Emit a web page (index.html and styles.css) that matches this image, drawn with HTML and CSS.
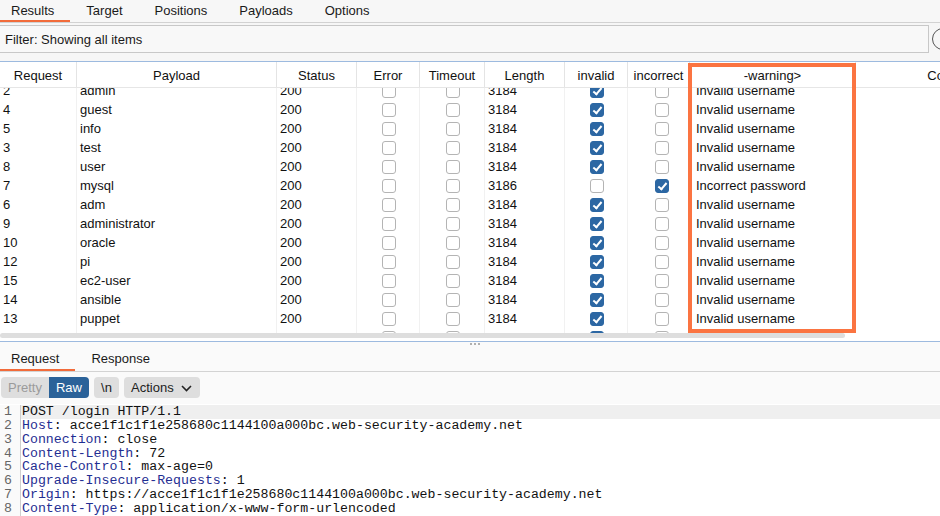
FILE: index.html
```html
<!DOCTYPE html>
<html>
<head>
<meta charset="utf-8">
<link rel="stylesheet" href="styles.css">
</head>
<body>
<div class="app">
  <div class="tabs top-tabs">
    <div class="tab active">Results</div>
    <div class="tab">Target</div>
    <div class="tab">Positions</div>
    <div class="tab">Payloads</div>
    <div class="tab">Options</div>
  </div>
  <div class="filter-row">
    <div class="filter">Filter: Showing all items</div>
    <div class="help"></div>
  </div>
  <div class="results">
    <div class="grid head">
      <div class="hc">Request</div>
      <div class="hc">Payload</div>
      <div class="hc">Status</div>
      <div class="hc">Error</div>
      <div class="hc">Timeout</div>
      <div class="hc">Length</div>
      <div class="hc">invalid</div>
      <div class="hc">incorrect</div>
      <div class="hc">-warning&gt;</div>
      <div class="hc">Comment</div>
    </div>
    <div class="body">
      <div class="rows">
        <div class="grid row"><div class="c">2</div><div class="c">admin</div><div class="c">200</div><div class="c cb"><span class="box"></span></div><div class="c cb"><span class="box"></span></div><div class="c">3184</div><div class="c cb"><span class="box on"></span></div><div class="c cb"><span class="box"></span></div><div class="c">Invalid username</div><div class="c"></div></div>
        <div class="grid row"><div class="c">4</div><div class="c">guest</div><div class="c">200</div><div class="c cb"><span class="box"></span></div><div class="c cb"><span class="box"></span></div><div class="c">3184</div><div class="c cb"><span class="box on"></span></div><div class="c cb"><span class="box"></span></div><div class="c">Invalid username</div><div class="c"></div></div>
        <div class="grid row"><div class="c">5</div><div class="c">info</div><div class="c">200</div><div class="c cb"><span class="box"></span></div><div class="c cb"><span class="box"></span></div><div class="c">3184</div><div class="c cb"><span class="box on"></span></div><div class="c cb"><span class="box"></span></div><div class="c">Invalid username</div><div class="c"></div></div>
        <div class="grid row"><div class="c">3</div><div class="c">test</div><div class="c">200</div><div class="c cb"><span class="box"></span></div><div class="c cb"><span class="box"></span></div><div class="c">3184</div><div class="c cb"><span class="box on"></span></div><div class="c cb"><span class="box"></span></div><div class="c">Invalid username</div><div class="c"></div></div>
        <div class="grid row"><div class="c">8</div><div class="c">user</div><div class="c">200</div><div class="c cb"><span class="box"></span></div><div class="c cb"><span class="box"></span></div><div class="c">3184</div><div class="c cb"><span class="box on"></span></div><div class="c cb"><span class="box"></span></div><div class="c">Invalid username</div><div class="c"></div></div>
        <div class="grid row"><div class="c">7</div><div class="c">mysql</div><div class="c">200</div><div class="c cb"><span class="box"></span></div><div class="c cb"><span class="box"></span></div><div class="c">3186</div><div class="c cb"><span class="box"></span></div><div class="c cb"><span class="box on"></span></div><div class="c">Incorrect password</div><div class="c"></div></div>
        <div class="grid row"><div class="c">6</div><div class="c">adm</div><div class="c">200</div><div class="c cb"><span class="box"></span></div><div class="c cb"><span class="box"></span></div><div class="c">3184</div><div class="c cb"><span class="box on"></span></div><div class="c cb"><span class="box"></span></div><div class="c">Invalid username</div><div class="c"></div></div>
        <div class="grid row"><div class="c">9</div><div class="c">administrator</div><div class="c">200</div><div class="c cb"><span class="box"></span></div><div class="c cb"><span class="box"></span></div><div class="c">3184</div><div class="c cb"><span class="box on"></span></div><div class="c cb"><span class="box"></span></div><div class="c">Invalid username</div><div class="c"></div></div>
        <div class="grid row"><div class="c">10</div><div class="c">oracle</div><div class="c">200</div><div class="c cb"><span class="box"></span></div><div class="c cb"><span class="box"></span></div><div class="c">3184</div><div class="c cb"><span class="box on"></span></div><div class="c cb"><span class="box"></span></div><div class="c">Invalid username</div><div class="c"></div></div>
        <div class="grid row"><div class="c">12</div><div class="c">pi</div><div class="c">200</div><div class="c cb"><span class="box"></span></div><div class="c cb"><span class="box"></span></div><div class="c">3184</div><div class="c cb"><span class="box on"></span></div><div class="c cb"><span class="box"></span></div><div class="c">Invalid username</div><div class="c"></div></div>
        <div class="grid row"><div class="c">15</div><div class="c">ec2-user</div><div class="c">200</div><div class="c cb"><span class="box"></span></div><div class="c cb"><span class="box"></span></div><div class="c">3184</div><div class="c cb"><span class="box on"></span></div><div class="c cb"><span class="box"></span></div><div class="c">Invalid username</div><div class="c"></div></div>
        <div class="grid row"><div class="c">14</div><div class="c">ansible</div><div class="c">200</div><div class="c cb"><span class="box"></span></div><div class="c cb"><span class="box"></span></div><div class="c">3184</div><div class="c cb"><span class="box on"></span></div><div class="c cb"><span class="box"></span></div><div class="c">Invalid username</div><div class="c"></div></div>
        <div class="grid row"><div class="c">13</div><div class="c">puppet</div><div class="c">200</div><div class="c cb"><span class="box"></span></div><div class="c cb"><span class="box"></span></div><div class="c">3184</div><div class="c cb"><span class="box on"></span></div><div class="c cb"><span class="box"></span></div><div class="c">Invalid username</div><div class="c"></div></div>
        <div class="grid row"><div class="c"></div><div class="c"></div><div class="c"></div><div class="c cb"><span class="box"></span></div><div class="c cb"><span class="box"></span></div><div class="c"></div><div class="c cb"><span class="box on"></span></div><div class="c cb"><span class="box"></span></div><div class="c"></div><div class="c"></div></div>
      </div>
    </div>
    <div class="hscroll"><div class="thumb"></div></div>
    <div class="mark"></div>
  </div>
  <div class="lower">
    <div class="dots"><i></i><i></i><i></i></div>
    <div class="tabs bottom-tabs">
      <div class="tab active">Request</div>
      <div class="tab">Response</div>
    </div>
    <div class="toolbar">
      <div class="seg">
        <span class="btn pretty">Pretty</span><span class="btn raw">Raw</span>
      </div>
      <span class="btn plain">\n</span>
      <span class="btn plain actions">Actions
        <svg width="11" height="7" viewBox="0 0 11 7"><path d="M1 1 L5.5 5.5 L10 1" fill="none" stroke="#222" stroke-width="1.6"/></svg>
      </span>
    </div>
    <div class="editor">
      <div class="gutter">
        <div>1</div><div>2</div><div>3</div><div>4</div><div>5</div><div>6</div><div>7</div><div>8</div>
      </div>
      <div class="code">
        <div class="ln cur">POST /login HTTP/1.1</div>
        <div class="ln"><span class="k">Host</span>: acce1f1c1f1e258680c1144100a000bc.web-security-academy.net</div>
        <div class="ln"><span class="k">Connection</span>: close</div>
        <div class="ln"><span class="k">Content-Length</span>: 72</div>
        <div class="ln"><span class="k">Cache-Control</span>: max-age=0</div>
        <div class="ln"><span class="k">Upgrade-Insecure-Requests</span>: 1</div>
        <div class="ln"><span class="k">Origin</span>: https://acce1f1c1f1e258680c1144100a000bc.web-security-academy.net</div>
        <div class="ln"><span class="k">Content-Type</span>: application/x-www-form-urlencoded</div>
      </div>
    </div>
  </div>
</div>
</body>
</html>
```

FILE: styles.css
```css
* { box-sizing: border-box; }
html, body { margin: 0; padding: 0; }
body {
  width: 940px;
  height: 516px;
  overflow: hidden;
  font-family: "Liberation Sans", Arial, sans-serif;
  font-size: 13px;
  color: #1a1a1a;
  background: #fafafa;
}
.app { width: 940px; height: 516px; overflow: hidden; display: flex; flex-direction: column; }

.tabs { display: flex; }
.tab { padding: 0 16px; display: flex; align-items: center; white-space: nowrap; }
.tab.active { box-shadow: inset 0 -2px 0 #f26b3a; }

.top-tabs {
  height: 23px;
  flex: none;
  background: #f7f7f7;
  border-bottom: 1px solid #d2d2d2;
  margin-left: -5px;
}
.top-tabs .tab { padding-bottom: 2px; }

.filter-row {
  height: 38px;
  flex: none;
  background: #f6f6f6;
  display: flex;
  align-items: flex-start;
  padding-top: 2px;
  overflow: hidden;
}
.filter {
  flex: none;
  width: 929px;
  height: 28px;
  border: 1px solid #c8c8c8;
  border-left: none;
  background: #f8f8f8;
  display: flex;
  align-items: center;
  padding-left: 5px;
}
.help {
  margin-left: 3px;
  margin-top: 3px;
  width: 22px;
  height: 22px;
  border: 1.5px solid #555;
  border-radius: 50%;
  flex: none;
}

.results {
  position: relative;
  flex: none;
  height: 281px;
  background: #fff;
  border-top: 1px solid #9dbadf;
  border-bottom: 1px solid #9dbadf;
  overflow: hidden;
}
.grid {
  display: grid;
  grid-template-columns: 77px 200px 80px 63px 65px 80px 63px 62px 166px 200px;
  width: 1056px;
}
.head { height: 26px; border-bottom: 1px solid #e6e6e6; background: #fff; }
.hc {
  display: flex;
  align-items: center;
  justify-content: center;
  border-right: 1px solid #e4e4e4;
  white-space: nowrap;
  color: #111;
  padding-top: 1px;
}
.body { height: 245px; overflow: hidden; }
.rows { margin-top: -7px; }
.row { height: 19px; }
.c {
  display: flex;
  align-items: center;
  padding-left: 3px;
  border-right: 1px solid #f1f1f1;
  white-space: nowrap;
  overflow: hidden;
  color: #111;
}
.c.cb { justify-content: center; padding-left: 2px; }
.row .c:nth-child(8) { padding-left: 6px; }
.row .c:nth-child(9) { padding-left: 6px; }
.box {
  width: 14px;
  height: 14px;
  border: 1px solid #b4b4b4;
  border-radius: 3px;
  background: #fff;
  position: relative;
}
.box.on { background: #2c67a3; border-color: #2c67a3; }
.box.on::after {
  content: "";
  position: absolute;
  left: 4px;
  top: 1px;
  width: 3px;
  height: 7px;
  border-right: 2px solid #fff;
  border-bottom: 2px solid #fff;
  transform: rotate(40deg);
}
.hscroll { height: 8px; background: #fff; }
.thumb { width: 845px; height: 5px; background: #dedede; border-radius: 3px; }
.mark {
  position: absolute;
  left: 688px;
  top: 1px;
  width: 168px;
  height: 270px;
  border: 4px solid #fb7441;
}

.lower { position: relative; flex: 1; display: flex; flex-direction: column; background: #fafafa; }
.dots { position: absolute; left: 470px; top: 1px; display: flex; gap: 2px; }
.dots i { width: 2px; height: 2px; background: #b0b0b0; display: block; }
.bottom-tabs {
  height: 30px;
  flex: none;
  border-bottom: 1px solid #d3d3d3;
  margin-left: -5px;
}
.bottom-tabs .tab { padding-top: 3px; }
.toolbar {
  height: 32px;
  flex: none;
  display: flex;
  align-items: flex-start;
  padding: 5px 0 0 1px;
  gap: 5px;
}
.seg { display: flex; }
.btn {
  height: 21px;
  display: flex;
  align-items: center;
  justify-content: center;
  background: #dedede;
  color: #222;
  border-radius: 4px;
  font-size: 13px;
}
.pretty { width: 48px; color: #9b9b9b; border-radius: 4px 0 0 4px; }
.raw { width: 40px; background: #2b6299; color: #fff; border-radius: 0 4px 4px 0; }
.plain { width: 25px; }
.actions { width: 76px; justify-content: flex-start; padding-left: 7px; gap: 7px; }
.actions svg { margin-top: 1px; }

.editor {
  flex: 1;
  display: flex;
  background: #fff;
  font-family: "Liberation Mono", "Courier New", monospace;
  font-size: 13.25px;
  line-height: 13.86px;
  padding-top: 1px;
}
.gutter {
  width: 21px;
  flex: none;
  border-right: 1px solid #cfcfcf;
  color: #666;
  text-align: right;
  padding-right: 8px;
  background: #fafafa;
}
.code { flex: 1; color: #111; }
.ln { padding-left: 1px; white-space: pre; }
.ln.cur { background: #efefef; }
.k { color: #1f2e92; }
```
